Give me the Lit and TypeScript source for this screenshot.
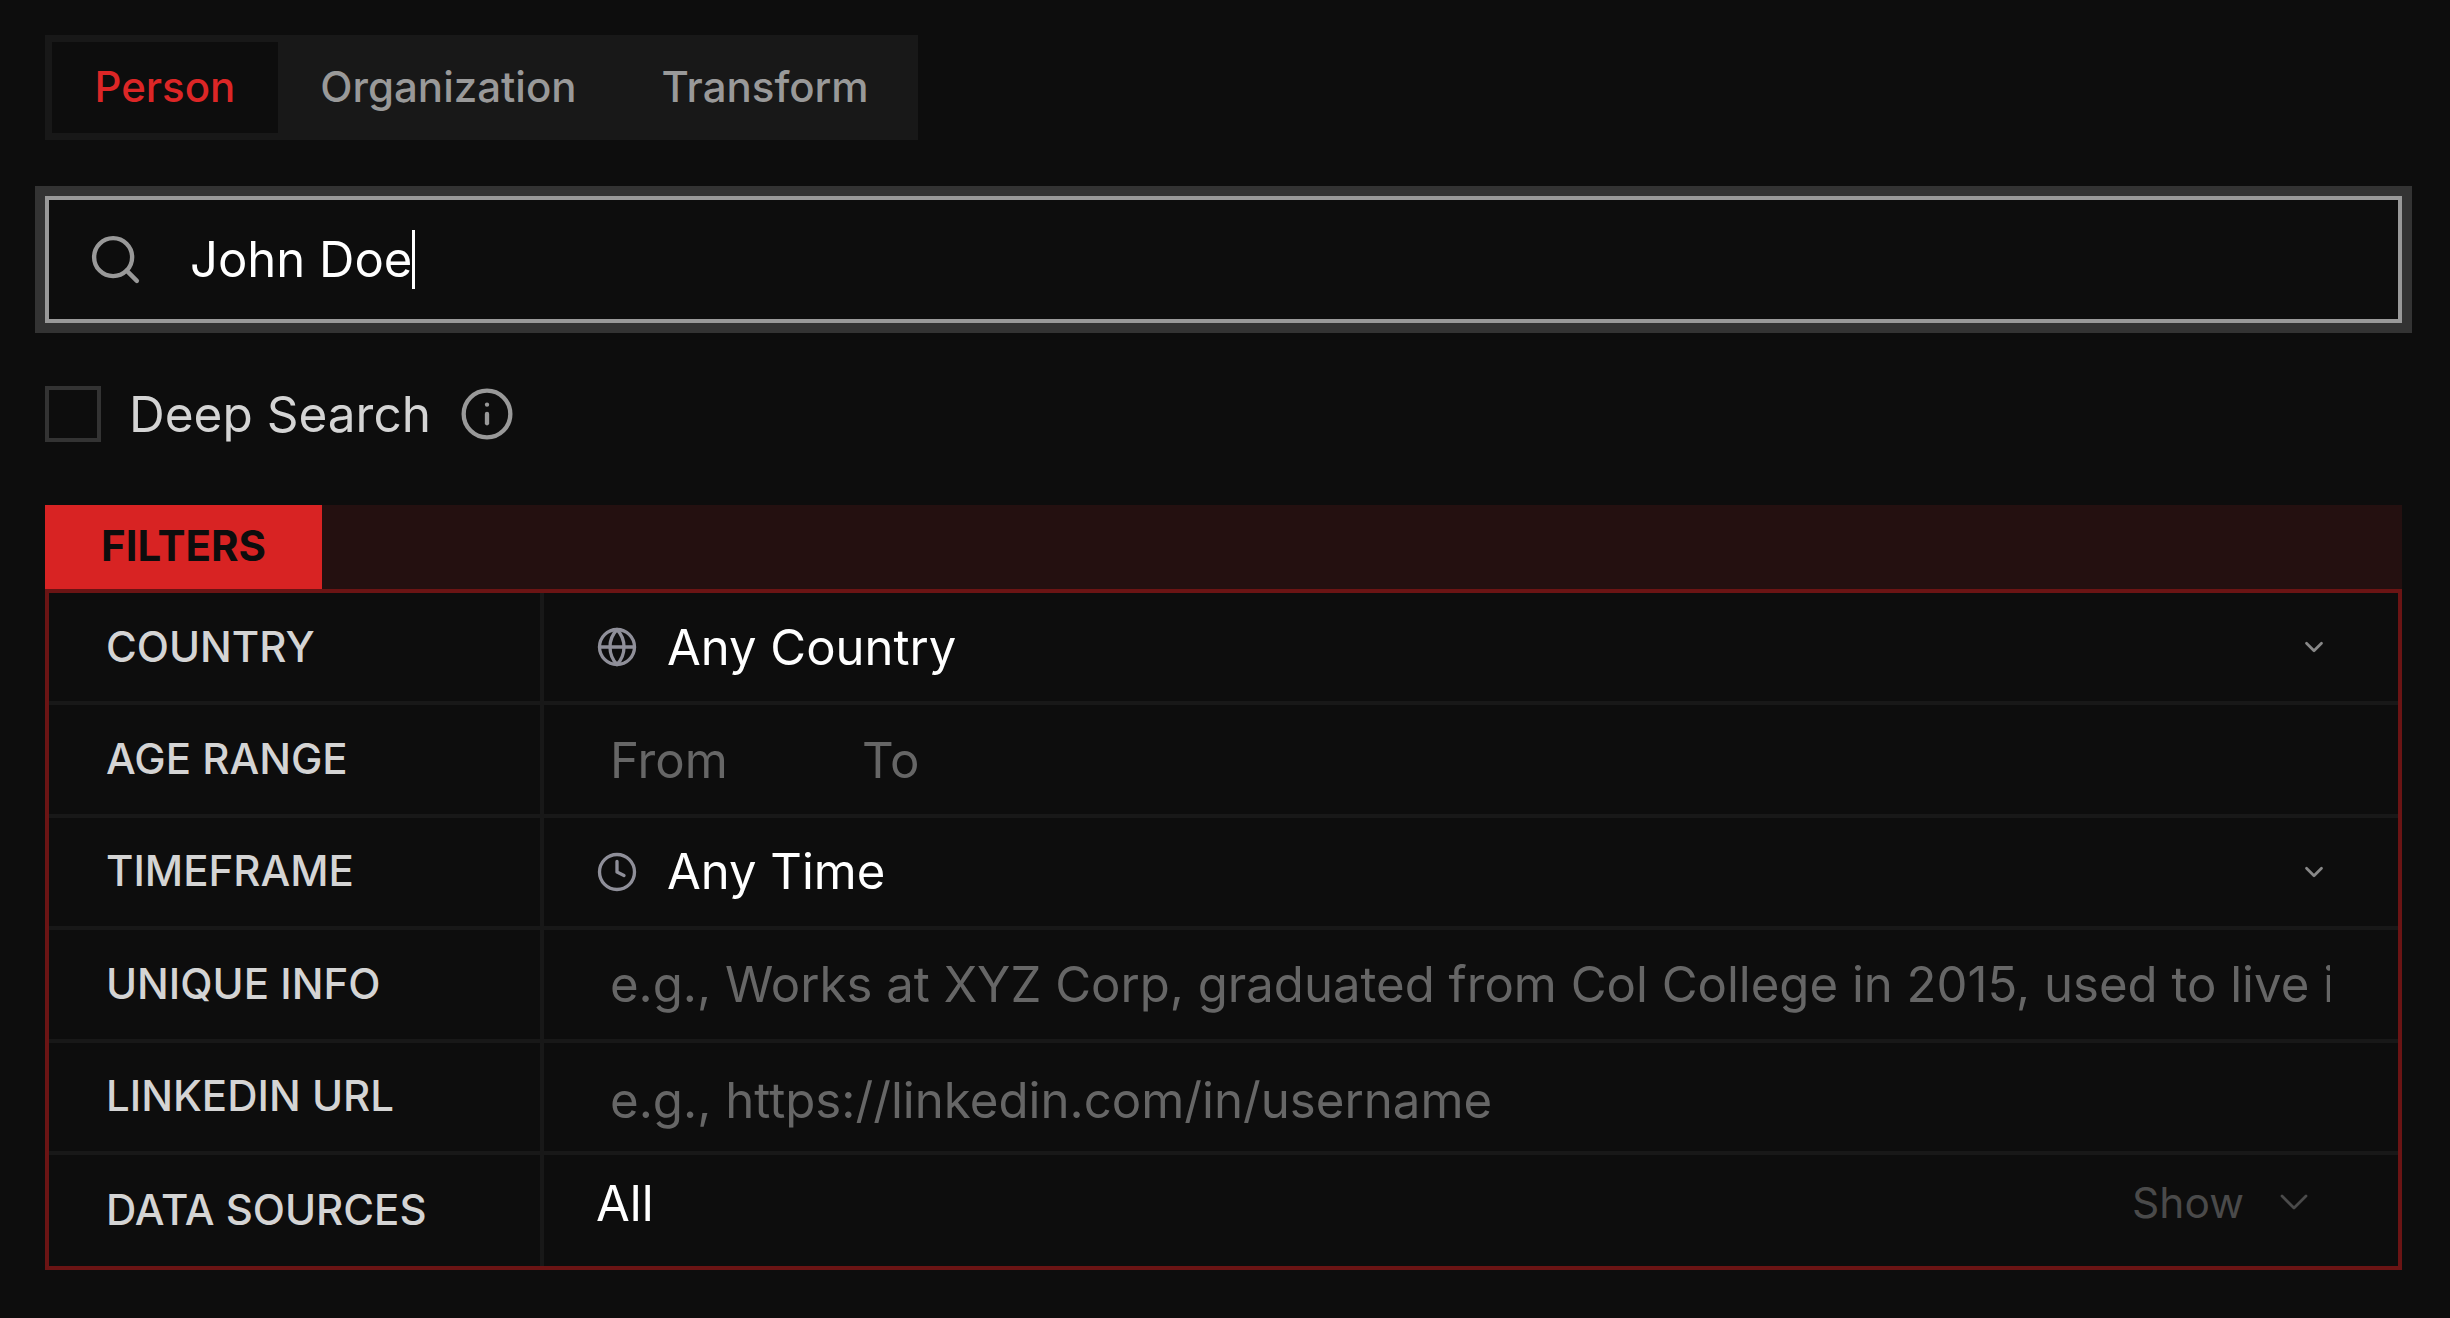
import { LitElement, html, css, svg } from 'lit';
import { customElement } from 'lit/decorators.js';

const chevron = (cls: string) => html`<svg class=${cls} viewBox="0 0 24 24" fill="none" stroke="currentColor" stroke-linecap="round" stroke-linejoin="round"><path d="m6 9 6 6 6-6"></path></svg>`;

const globe = svg`<circle cx="12" cy="12" r="10"></circle><path d="M12 2a14.5 14.5 0 0 0 0 20 14.5 14.5 0 0 0 0-20"></path><path d="M2 12h20"></path>`;
const clock = svg`<circle cx="12" cy="12" r="10"></circle><path d="M12 6v6l4 2"></path>`;

@customElement('app-root')
export class AppRoot extends LitElement {
  static styles = css`
    :host {
      display: block;
      min-height: 100vh;
      background: #0d0d0d;
      font-family: Inter, 'Liberation Sans', sans-serif;
      color: #fff;
    }

    .page {
      padding: 35px 48px 0 45px;
    }

    .tabs {
      display: inline-flex;
      height: 105px;
      box-sizing: border-box;
      padding: 7px;
      background: #181818;
    }

    .tab {
      display: flex;
      align-items: center;
      padding: 0 42.5px 2px;
      font-size: 42px;
      font-weight: 500;
      color: #999;
    }

    .tab.active {
      background: #0d0d0d;
      color: #dc2626;
    }

    .search {
      display: flex;
      align-items: center;
      height: 127px;
      box-sizing: border-box;
      margin-top: 56px;
      padding-left: 38px;
      border: 4px solid #999;
      box-shadow: 0 0 0 10px #333;
    }

    .search-icon {
      width: 57px;
      height: 57px;
      margin-right: 46px;
      color: #999;
      stroke-width: 1.85;
    }

    .query {
      font-size: 49px;
    }

    .caret {
      width: 3px;
      height: 59px;
      background: #fff;
    }

    .deep {
      display: flex;
      align-items: center;
      height: 56px;
      margin-top: 63px;
    }

    .checkbox {
      width: 56px;
      height: 56px;
      box-sizing: border-box;
      border: 4px solid #333;
      margin-right: 28px;
    }

    .deep-label {
      font-size: 49.5px;
      color: #d4d4d4;
    }

    .info-icon {
      width: 56px;
      height: 56px;
      margin-left: 28px;
      color: #999;
      stroke-width: 1.85;
    }

    .filters {
      margin-top: 63px;
    }

    .filters-head {
      display: flex;
      height: 84px;
      background: #241010;
    }

    .filters-title {
      display: flex;
      align-items: center;
      width: 277px;
      box-sizing: border-box;
      padding: 0 0 3px 56px;
      background: #d82323;
      color: #0d0d0d;
      font-size: 42px;
      font-weight: 700;
    }

    .table {
      border: 4px solid #6b1414;
    }

    .row {
      display: grid;
      grid-template-columns: 495px 1fr;
      height: 112.4px;
      box-sizing: border-box;
      border-bottom: 4px solid #181818;
    }

    .row:last-child {
      height: 111px;
      border-bottom: none;
    }

    .label {
      display: flex;
      align-items: center;
      padding: 0 0 2px 57px;
      border-right: 4px solid #181818;
      font-size: 42px;
      font-weight: 500;
      color: #d4d4d4;
    }

    .value {
      display: flex;
      align-items: center;
      min-width: 0;
      padding-left: 52px;
      padding-right: 67px;
      font-size: 49px;
    }

    .row-icon {
      width: 42px;
      height: 42px;
      margin-right: 29px;
      color: #8f8f99;
      stroke-width: 1.9;
    }

    .select-text {
      flex: 1;
    }

    .chevron {
      width: 30px;
      height: 30px;
      margin-right: 2px;
      color: #888;
      stroke-width: 2.2;
    }

    .field {
      padding-left: 66px;
      color: #666;
      font-size: 49.2px;
    }

    .range-part {
      width: 252px;
    }

    .clipped {
      flex: 1;
      overflow: hidden;
      white-space: nowrap;
    }

    .info-text {
      font-size: 49.1px;
      margin-right: 1px;
    }

    .url {
      padding-top: 6px;
    }

    .sources {
      padding-bottom: 16px;
    }

    .all {
      flex: 1;
      padding-top: 2px;
    }

    .show {
      font-size: 42.5px;
      color: #4a4a4a;
      margin-right: 26px;
    }

    .show-chevron {
      width: 48px;
      height: 48px;
      margin-right: 13px;
      color: #4a4a4a;
      stroke-width: 1.4;
    }
  `;

  private _icon(cls: string, body: unknown) {
    return html`<svg class=${cls} viewBox="0 0 24 24" fill="none" stroke="currentColor" stroke-linecap="round" stroke-linejoin="round">${body}</svg>`;
  }

  render() {
    return html`
      <div class="page">
        <div class="tabs">
          <div class="tab active">Person</div>
          <div class="tab">Organization</div>
          <div class="tab">Transform</div>
        </div>

        <div class="search">
          ${this._icon('search-icon', svg`<circle cx="11" cy="11" r="8"></circle><path d="m21 21-4.3-4.3"></path>`)}
          <span class="query">John Doe</span><span class="caret"></span>
        </div>

        <div class="deep">
          <div class="checkbox"></div>
          <span class="deep-label">Deep Search</span>
          ${this._icon('info-icon', svg`<circle cx="12" cy="12" r="10"></circle><path d="M12 16v-4"></path><path d="M12 8h.01"></path>`)}
        </div>

        <div class="filters">
          <div class="filters-head"><div class="filters-title">FILTERS</div></div>
          <div class="table">
            <div class="row">
              <div class="label">COUNTRY</div>
              <div class="value">
                ${this._icon('row-icon', globe)}
                <span class="select-text">Any Country</span>
                ${chevron('chevron')}
              </div>
            </div>
            <div class="row">
              <div class="label">AGE RANGE</div>
              <div class="value field">
                <span class="range-part">From</span>
                <span>To</span>
              </div>
            </div>
            <div class="row">
              <div class="label">TIMEFRAME</div>
              <div class="value">
                ${this._icon('row-icon', clock)}
                <span class="select-text">Any Time</span>
                ${chevron('chevron')}
              </div>
            </div>
            <div class="row">
              <div class="label">UNIQUE INFO</div>
              <div class="value field">
                <span class="clipped info-text">e.g., Works at XYZ Corp, graduated from Col College in 2015, used to live in Boston</span>
              </div>
            </div>
            <div class="row">
              <div class="label">LINKEDIN URL</div>
              <div class="value field">
                <span class="clipped url">e.g., https://linkedin.com/in/username</span>
              </div>
            </div>
            <div class="row">
              <div class="label">DATA SOURCES</div>
              <div class="value sources">
                <span class="all">All</span>
                <span class="show">Show</span>
                ${chevron('show-chevron')}
              </div>
            </div>
          </div>
        </div>
      </div>
    `;
  }
}
